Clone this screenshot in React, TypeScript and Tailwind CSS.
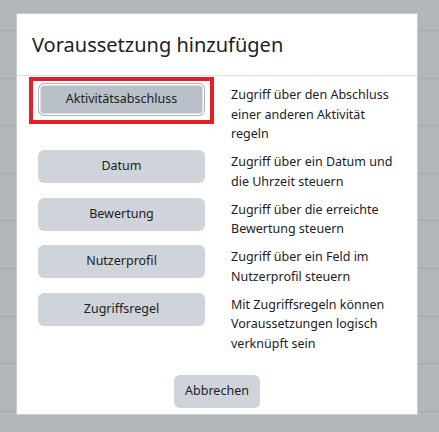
import React from "react";

type Condition = {
  label: string;
  description: string;
  focused?: boolean;
};

const conditions: Condition[] = [
  {
    label: "Aktivitätsabschluss",
    description: "Zugriff über den Abschluss einer anderen Aktivität regeln",
    focused: true,
  },
  { label: "Datum", description: "Zugriff über ein Datum und die Uhrzeit steuern" },
  { label: "Bewertung", description: "Zugriff über die erreichte Bewertung steuern" },
  { label: "Nutzerprofil", description: "Zugriff über ein Feld im Nutzerprofil steuern" },
  {
    label: "Zugriffsregel",
    description: "Mit Zugriffsregeln können Voraussetzungen logisch verknüpft sein",
  },
];

function ConditionRow({ label, description, focused }: Condition) {
  return (
    <div className="flex items-start gap-[26px] mb-[6.5px]">
      <div className="relative shrink-0">
        {focused && (
          <div className="absolute -left-[9px] -right-[9px] -top-[6px] -bottom-[8px] border-4 border-[#e51f28]" />
        )}
        <button
          className={
            focused
              ? "relative w-[167px] h-[33px] rounded-md bg-[#b9c0c8] text-[#1d2125] text-[12.5px] border border-[#b0b7bf] shadow-[inset_0_0_0_1.5px_#fff]"
              : "relative w-[167px] h-[33px] rounded-md bg-[#ced4da] text-[#1d2125] text-[12.5px]"
          }
        >
          {label}
        </button>
      </div>
      <p className="pt-[2px] w-[172px] text-[12.5px] leading-[19.5px] text-[#1d2125]">
        {description}
      </p>
    </div>
  );
}

export default function App() {
  const lines = [0, 1, 2, 3, 4, 5, 6, 7, 8];
  return (
    <div
      className="relative w-[439px] h-[432px] overflow-hidden bg-[#b4b7ba]"
      style={{ fontFamily: '"Noto Sans", "Open Sans", sans-serif' }}
    >
      {/* page rows behind the backdrop */}
      <div className="flex flex-col pt-[2px]">
        {lines.map((i) => (
          <div key={i} className="h-[47.6px] border-b border-[#a7aaad] first:h-[29px]" />
        ))}
      </div>

      {/* dialog */}
      <div className="absolute left-[16px] top-[13px] w-[402px] h-[402px] bg-white border border-[#c9cbcd] flex flex-col">
        <div className="h-[62px] shrink-0 flex items-center px-[15px] border-b border-[#dee2e6]">
          <h5 className="text-[20px] text-[#1d2125] leading-none">Voraussetzung hinzufügen</h5>
        </div>
        <div className="pl-[21px] pt-[7px]">
          {conditions.map((c) => (
            <ConditionRow key={c.label} {...c} />
          ))}
        </div>
        <div className="flex justify-center pt-[15px]">
          <button className="w-[86px] h-[33px] rounded-md bg-[#ced4da] text-[#1d2125] text-[12.5px]">
            Abbrechen
          </button>
        </div>
      </div>
    </div>
  );
}
